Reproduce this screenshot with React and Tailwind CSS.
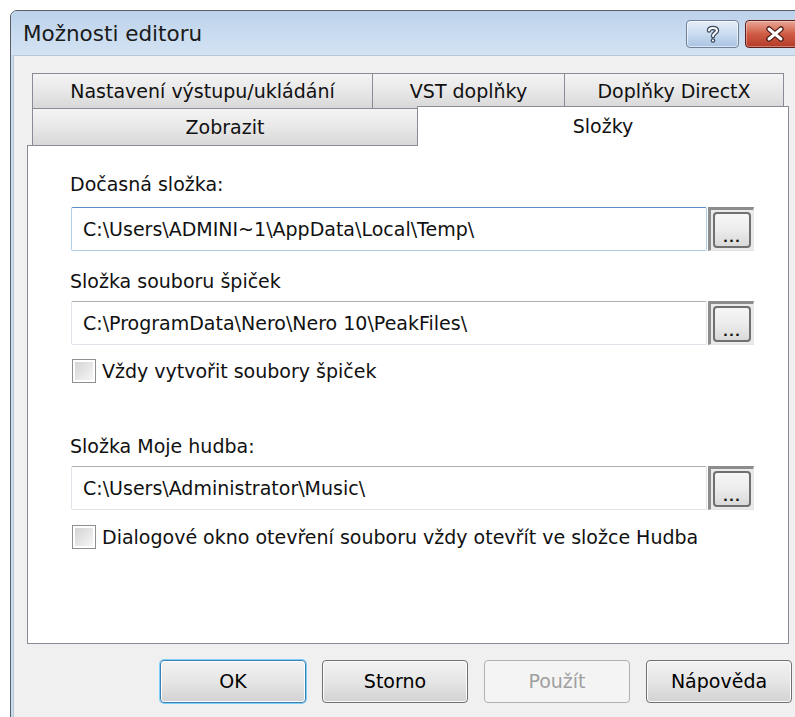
import React from "react";

const font = "font-['DejaVu_Sans','Liberation_Sans',sans-serif]";

// title bar glyph buttons
function HelpButton() {
  return (
    <div className="w-[53px] h-[28px] rounded-[4px] border border-[#6f829b] bg-gradient-to-b from-[#e6eef8] via-[#c9dbef] to-[#a9c3e2] flex items-center justify-center shadow-[inset_0_0_0_1px_rgba(255,255,255,0.6)]">
      <svg width="18" height="20" viewBox="0 0 18 20">
        <path d="M5 6.5 C5 3.5 13 3 13 6.5 C13 9 9 9 9 12" fill="none" stroke="#3b4a5c" strokeWidth="4.5" strokeLinecap="round" />
        <path d="M5 6.5 C5 3.5 13 3 13 6.5 C13 9 9 9 9 12" fill="none" stroke="#ffffff" strokeWidth="2" strokeLinecap="round" />
        <circle cx="9" cy="16.5" r="2.3" fill="#3b4a5c" />
        <circle cx="9" cy="16.5" r="1.1" fill="#ffffff" />
      </svg>
    </div>
  );
}

function CloseButton() {
  return (
    <div className="w-[60px] h-[28px] rounded-[4px] border border-[#5e1f1a] bg-gradient-to-b from-[#e8a596] via-[#cf5c45] to-[#b43a28] flex items-center justify-center shadow-[inset_0_0_0_1px_rgba(255,255,255,0.35)]">
      <svg width="22" height="16" viewBox="0 0 22 16">
        <path d="M5 3 L17 13 M17 3 L5 13" stroke="#4a1a14" strokeWidth="5.5" strokeLinecap="round" />
        <path d="M5 3 L17 13 M17 3 L5 13" stroke="#ffffff" strokeWidth="3" strokeLinecap="round" />
      </svg>
    </div>
  );
}

function Tab({ label, className = "" }) {
  return (
    <div
      className={`h-full flex items-center justify-center border-t border-l border-r border-[#898c95] bg-gradient-to-b from-[#f4f4f4] via-[#e8e8e8] to-[#d8d8d8] ${className}`}
    >
      {label}
    </div>
  );
}

function PathField({ value, focused }) {
  return (
    <div className="flex ml-[1px]">
      <div
        className={`w-[636px] h-[44px] flex items-center pl-[11px] bg-white rounded-[2px] border ${
          focused
            ? "border-[#b3cde6] border-t-[#5b8fc4]"
            : "border-[#dfe3ea] border-t-[#abadb3]"
        }`}
      >
        {value}
      </div>
      {/* browse button */}
      <div className="w-[46px] h-[44px] ml-[1px] bg-[#eaeaea] border-l-[3px] border-t-[3px] border-[#8c8c8c] border-r border-b border-r-[#e4e4e4] border-b-[#e4e4e4] p-[2px]">
        <div className="w-full h-full rounded-[4px] border-2 border-[#707070] bg-gradient-to-b from-[#f6f6f6] via-[#ececec] to-[#d9d9d9] flex items-end justify-center pb-[2px] text-[13px] leading-none tracking-[1px] font-bold">
          ...
        </div>
      </div>
    </div>
  );
}

function Check({ label, className = "" }) {
  return (
    <div className={`flex items-center h-[26px] ${className}`}>
      <div className="w-[24px] h-[24px] ml-[2px] border border-[#8f8f8f] bg-white p-[2px]">
        <div className="w-full h-full bg-gradient-to-br from-[#d4d4d4] to-[#f6f6f6]" />
      </div>
      <span className="ml-[6px]">{label}</span>
    </div>
  );
}

function DlgButton({ label, variant }) {
  const styles = {
    default:
      "border-[#3c7fb1] shadow-[0_0_0_1px_#7fd0f7,inset_0_0_0_1px_#ffffff] bg-gradient-to-b from-[#f2f2f2] via-[#e6e6e6] to-[#d2d2d2] text-black",
    normal:
      "border-[#707070] shadow-[inset_0_0_0_1px_#fbfbfb] bg-gradient-to-b from-[#f2f2f2] via-[#e6e6e6] to-[#d2d2d2] text-black",
    disabled: "border-[#adb2b5] bg-[#f4f4f4] text-[#a0a0a0]",
  };
  return (
    <div
      className={`w-[146px] h-[43px] rounded-[4px] border flex items-center justify-center ${styles[variant]}`}
    >
      {label}
    </div>
  );
}

export default function App() {
  return (
    <div className={`w-[795px] h-[717px] overflow-hidden bg-white text-[19px] text-[#111] ${font}`}>
      {/* dialog window */}
      <div className="ml-[10px] mt-[10px] w-[802px] h-[720px] rounded-tl-[7px] border border-[#5a5f66] bg-[#c8dbf0] flex flex-col">
        {/* title bar */}
        <div className="h-[44px] flex items-start bg-gradient-to-b from-[#bcd2ea] to-[#d4e3f4] rounded-tl-[6px]">
          <div className="h-[28px] mt-[9px] ml-[12px] flex items-center text-[21.5px] text-[#1a1a1a]">
            Možnosti editoru
          </div>
          <div className="ml-auto mt-[9px] mr-[6px] flex gap-[6px]">
            <HelpButton />
            <CloseButton />
          </div>
        </div>

        {/* client area */}
        <div className="flex-1 ml-[2px] mr-[4px] bg-[#f0f0f0] border-l border-t border-[#b9c7d6] flex flex-col">
          <div className="ml-[13px] mt-[17px] w-[762px]">
            {/* tab rows */}
            <div className="flex pl-[5px] h-[35px]">
              <Tab label="Nastavení výstupu/ukládání" className="w-[341px]" />
              <Tab label="VST doplňky" className="w-[193px] -ml-px" />
              <Tab label="Doplňky DirectX" className="w-[220px] -ml-px" />
            </div>
            <div className="flex items-end pl-[5px] h-[37px]">
              <Tab label="Zobrazit" className="w-[386px]" />
              <div className="relative z-10 w-[372px] h-[40px] -mb-px -ml-px border-t border-l border-r border-[#898c95] bg-white flex items-start justify-center pt-[5px]">
                Složky
              </div>
            </div>

            {/* folders page */}
            <div className="h-[499px] border border-[#898c95] bg-white pl-[42px] flex flex-col">
              <div className="mt-[26px] h-[24px] leading-[24px]">Dočasná složka:</div>
              <div className="mt-[11px]">
                <PathField value="C:\Users\ADMINI~1\AppData\Local\Temp\" focused />
              </div>
              <div className="mt-[18px] h-[24px] leading-[24px]">Složka souboru špiček</div>
              <div className="mt-[8px]">
                <PathField value="C:\ProgramData\Nero\Nero 10\PeakFiles\" />
              </div>
              <Check label="Vždy vytvořit soubory špiček" className="mt-[13px]" />

              <div className="mt-[50px] h-[24px] leading-[24px]">Složka Moje hudba:</div>
              <div className="mt-[8px]">
                <PathField value="C:\Users\Administrator\Music\" />
              </div>
              <Check
                label="Dialogové okno otevření souboru vždy otevřít ve složce Hudba"
                className="mt-[14px]"
              />
            </div>
          </div>

          {/* dialog buttons */}
          <div className="mt-[16px] ml-[146px] flex gap-[16px]">
            <DlgButton label="OK" variant="default" />
            <DlgButton label="Storno" variant="normal" />
            <DlgButton label="Použít" variant="disabled" />
            <DlgButton label="Nápověda" variant="normal" />
          </div>
        </div>
      </div>
    </div>
  );
}
